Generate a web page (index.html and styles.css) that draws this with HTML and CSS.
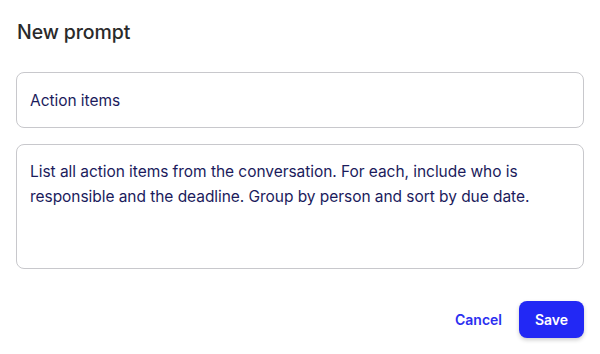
FILE: index.html
```html
<!DOCTYPE html>
<html>
<head>
<meta charset="utf-8">
<link rel="stylesheet" href="styles.css">
</head>
<body>
<div class="dialog">
  <h1 class="title">New prompt</h1>
  <div class="field field-input">Action items</div>
  <div class="field field-area">List all action items from the conversation. For each, include who is responsible and the deadline. Group by person and sort by due date.</div>
  <div class="actions">
    <button class="btn-cancel">Cancel</button>
    <button class="btn-save">Save</button>
  </div>
</div>
</body>
</html>
```
FILE: styles.css
```css
html, body { margin: 0; padding: 0; background: #fff; }
body { font-family: Inter, "Noto Sans", sans-serif; }
.dialog { width: 600px; height: 354px; box-sizing: border-box; padding: 18px 16px 16px 16px; display: flex; flex-direction: column; }
.title { margin: 0 0 0 1px; font-size: 19.5px; font-weight: 500; color: #2a2a2a; line-height: 28px; letter-spacing: -0.1px; }
.field { border: 1px solid #c8c8cc; border-radius: 8px; color: #1b1b5c; font-size: 15.5px; box-sizing: border-box; letter-spacing: -0.05px; }
.field-input { margin-top: 26px; height: 56px; padding: 0 13px; display: flex; align-items: center; }
.field-area { margin-top: 16px; height: 125px; padding: 14px 13px; line-height: 25px; }
.actions { margin-top: 32px; display: flex; justify-content: flex-end; align-items: center; gap: 17px; }
.btn-cancel { background: none; border: 0; padding: 0; font-family: inherit; font-size: 14px; font-weight: 600; color: #2b2ef0; }
.btn-save { background: #2228f5; color: #fff; border: 0; border-radius: 8px; width: 65px; height: 37px; font-family: inherit; font-size: 14px; font-weight: 600; box-shadow: 0 2px 4px rgba(0,0,0,0.2); }
```
